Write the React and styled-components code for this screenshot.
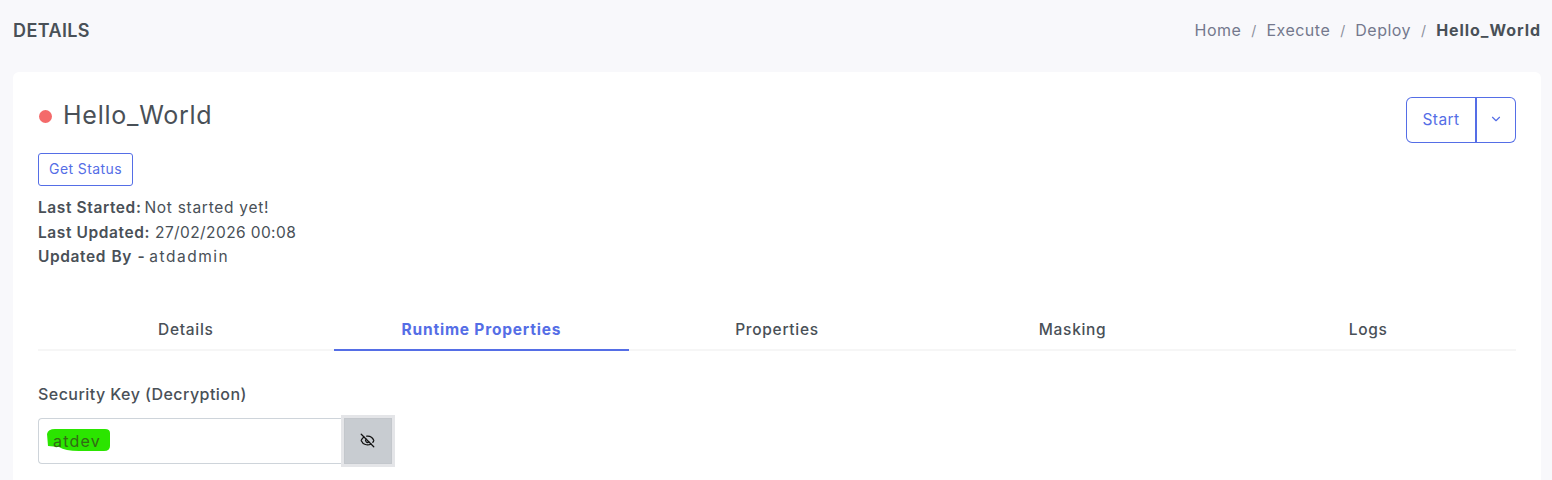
import React from 'react'
import styled, { createGlobalStyle } from 'styled-components'
import { ChevronDown, EyeOff } from 'lucide-react'

const GlobalStyle = createGlobalStyle`
  html, body {
    margin: 0;
    height: 100%;
    overflow: hidden;
    background: #f8f8fb;
    font-family: "Inter", "Liberation Sans", sans-serif;
    color: #495057;
  }
`

const Page = styled.div`
  padding: 0 11px 0 13px;
`
const TopBar = styled.div`
  display: flex;
  align-items: center;
  justify-content: space-between;
  height: 60px;
  margin-bottom: 12px;
`
const PageTitle = styled.div`
  font-size: 18px;
  font-weight: 600;
  letter-spacing: 0.4px;
  color: #495057;
`
const Crumbs = styled.div`
  display: flex;
  align-items: center;
  font-size: 16px;
  color: #74788d;
`
const Crumb = styled.span`
  font-weight: ${p => (p.$active ? 700 : 400)};
  color: ${p => (p.$active ? '#495057' : '#74788d')};
  letter-spacing: ${p => (p.$active ? '0.95px' : '0.5px')};
`
const Slash = styled.span`
  margin: 0 10px;
  color: #8a8f9c;
  font-size: 14px;
`
const Card = styled.div`
  background: #fff;
  border-radius: 6px;
  padding: 25px;
  height: 420px;
  box-sizing: border-box;
`
const Head = styled.div`
  display: flex;
  justify-content: space-between;
  align-items: flex-start;
`
const Name = styled.div`
  display: flex;
  align-items: center;
  height: 36px;
  font-size: 25px;
  letter-spacing: 0.75px;
  color: #495057;
`
const Dot = styled.span`
  width: 13px;
  height: 13px;
  border-radius: 50%;
  background: #f46a6a;
  margin: 2px 11px 0 1px;
`
const SplitGroup = styled.div`
  display: flex;
  height: 46px;
`
const StartButton = styled.button`
  width: 71px;
  border: 1px solid #556ee6;
  border-right: 2px solid #556ee6;
  border-radius: 6px 0 0 6px;
  background: #fff;
  color: #556ee6;
  font: 400 15.5px "Inter", sans-serif;
  letter-spacing: 0.4px;
  padding: 0 0 2px;
`
const CaretButton = styled.button`
  width: 39px;
  border: 1px solid #556ee6;
  border-left: 0;
  border-radius: 0 6px 6px 0;
  background: #fff;
  color: #556ee6;
  padding: 0 0 2px;
  display: flex;
  align-items: center;
  justify-content: center;
`
const StatusButton = styled.button`
  display: block;
  width: 95px;
  height: 33px;
  margin-top: 10px;
  padding: 0 0 2px;
  border: 1px solid #556ee6;
  border-radius: 3px;
  background: #fff;
  color: #556ee6;
  font: 400 14px "Inter", sans-serif;
  letter-spacing: 0.4px;
`
const Meta = styled.div`
  margin-top: 10px;
  font-size: 15.5px;
  line-height: 24.5px;
  letter-spacing: 0.6px;
  color: #495057;
`
const MetaLabel = styled.b`
  font-weight: 600;
  word-spacing: ${p => p.$wordGap || 0}px;
`
const MetaValue = styled.span`
  letter-spacing: ${p => p.$track}px;
  margin-left: ${p => p.$shift || 0}px;
`
const Tabs = styled.div`
  display: grid;
  grid-template-columns: repeat(5, 1fr);
  margin-top: 37px;
  border-bottom: 2px solid #f6f6f6;
`
const Tab = styled.div`
  height: 44px;
  margin-bottom: -2px;
  display: flex;
  align-items: center;
  justify-content: center;
  font-size: 15.5px;
  letter-spacing: ${p => (p.$active ? '0.8px' : '0.7px')};
  font-weight: ${p => (p.$active ? 700 : 500)};
  color: ${p => (p.$active ? '#556ee6' : '#495057')};
  border-bottom: 2px solid ${p => (p.$active ? '#556ee6' : 'transparent')};
  box-sizing: border-box;
  padding-top: 4px;
`
const FieldLabel = styled.div`
  margin-top: 31px;
  font-size: 16px;
  font-weight: 500;
  line-height: 24px;
  letter-spacing: 0.45px;
  color: #495057;
`
const KeyRow = styled.div`
  display: flex;
  margin-top: 12px;
  width: 354px;
  height: 46px;
`
const KeyValue = styled.div`
  position: relative;
  flex: 1;
  display: flex;
  align-items: center;
  padding-left: 14px;
  border: 1px solid #ced4da;
  border-right: 0;
  border-radius: 4px 0 0 4px;
  font-size: 16px;
  letter-spacing: 1.2px;
  color: #336a16;
`
const KeyText = styled.span`
  position: relative;
`
const Scribble = styled.svg`
  position: absolute;
  left: 8px;
  top: 9px;
`
const EyeButton = styled.button`
  width: 48px;
  height: 46px;
  padding: 0 2px 0 0;
  border: 1px solid #c3c7cc;
  border-radius: 0;
  background: #c8ccd1;
  box-shadow: 0 0 0 3px #e4e5e8;
  color: #111;
  display: flex;
  align-items: center;
  justify-content: center;
  position: relative;
`

export default function App() {
  return (
    <Page>
      <GlobalStyle />
      <TopBar>
        <PageTitle>DETAILS</PageTitle>
        <Crumbs>
          <Crumb>Home</Crumb><Slash>/</Slash>
          <Crumb>Execute</Crumb><Slash>/</Slash>
          <Crumb>Deploy</Crumb><Slash>/</Slash>
          <Crumb $active>Hello_World</Crumb>
        </Crumbs>
      </TopBar>
      <Card>
        <Head>
          <Name><Dot />Hello_World</Name>
          <SplitGroup>
            <StartButton>Start</StartButton>
            <CaretButton><ChevronDown size={14} strokeWidth={2} /></CaretButton>
          </SplitGroup>
        </Head>
        <StatusButton>Get Status</StatusButton>
        <Meta>
          <div><MetaLabel>Last Started:</MetaLabel> <MetaValue $track={0.72} $shift={-2}>Not started yet!</MetaValue></div>
          <div><MetaLabel>Last Updated:</MetaLabel> <MetaValue $track={0.4}>27/02/2026 00:08</MetaValue></div>
          <div><MetaLabel $wordGap={1}>Updated By -</MetaLabel> <MetaValue $track={1.5} $shift={-1}>atdadmin</MetaValue></div>
        </Meta>
        <Tabs>
          <Tab>Details</Tab>
          <Tab $active>Runtime Properties</Tab>
          <Tab>Properties</Tab>
          <Tab>Masking</Tab>
          <Tab>Logs</Tab>
        </Tabs>
        <FieldLabel>Security Key (Decryption)</FieldLabel>
        <KeyRow>
          <KeyValue>
            <Scribble width="66" height="26" viewBox="0 0 66 26">
              <path d="M0 6 Q1 1 8 1 L58 1 Q63 1 63 5 L63 18 Q63 23 57 23 L32 23 Q18 23 12 19 L1 18 Z" fill="#2be500" />
            </Scribble>
            <KeyText>atdev</KeyText>
          </KeyValue>
          <EyeButton><EyeOff size={15} strokeWidth={2} /></EyeButton>
        </KeyRow>
      </Card>
    </Page>
  )
}
